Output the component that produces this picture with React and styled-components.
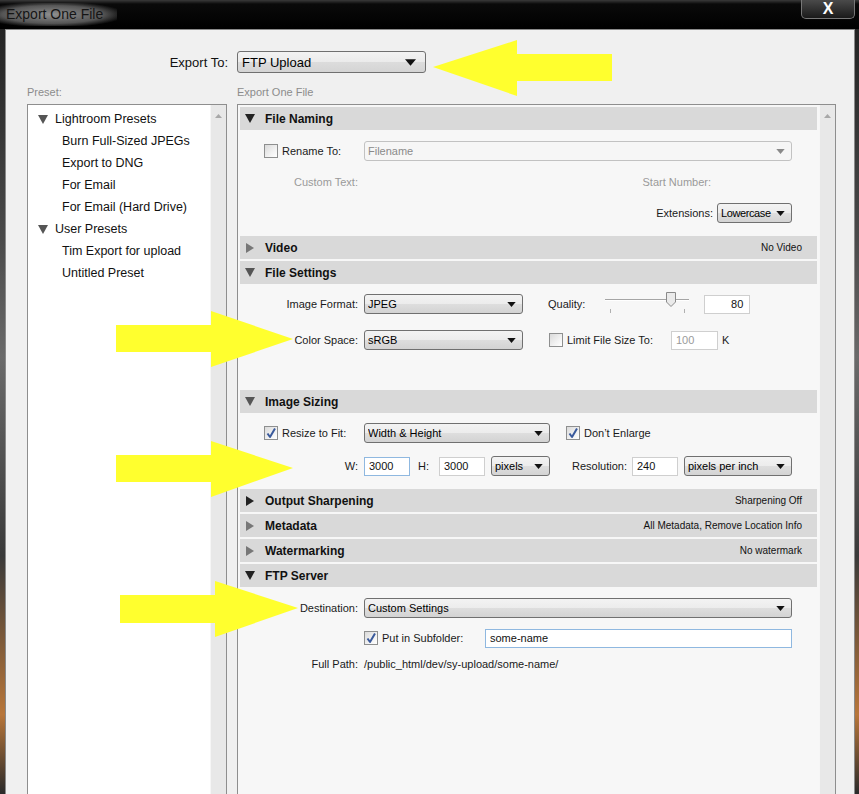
import React from "react";
import styled, { createGlobalStyle } from "styled-components";

const presets = [
  { group: "Lightroom Presets", items: ["Burn Full-Sized JPEGs", "Export to DNG", "For Email", "For Email (Hard Drive)"] },
  { group: "User Presets", items: ["Tim Export for upload", "Untitled Preset"] },
];

const collapsed = [
  { title: "Output Sharpening", summary: "Sharpening Off", dark: true },
  { title: "Metadata", summary: "All Metadata, Remove Location Info" },
  { title: "Watermarking", summary: "No watermark" },
];

const Triangle = ({ open, color }) =>
  open ? (
    <svg width="10" height="9" viewBox="0 0 10 9">
      <polygon points="0,0 10,0 5,9" fill={color} />
    </svg>
  ) : (
    <svg width="10" height="10" viewBox="0 0 10 10">
      <polygon points="1,0 9,5 1,10" fill={color} />
    </svg>
  );

const Caret = ({ size = 9, color = "#111" }) => (
  <svg width={size} height={Math.round(size * 0.6)} viewBox="0 0 10 6">
    <polygon points="0,0 10,0 5,6" fill={color} />
  </svg>
);

const Check = () => (
  <svg width="12" height="12" viewBox="0 0 12 12">
    <path d="M2.5 6.5 L5 10 L10 1.5" stroke="#3a5a9c" strokeWidth="2" fill="none" strokeLinejoin="round" />
  </svg>
);

const Box = ({ checked }) => <CheckBox>{checked && <Check />}</CheckBox>;

const Select = ({ children, disabled, tight, ...rest }) => (
  <SelectBox $disabled={disabled} {...rest}>
    <SelectText $tight={tight}>{children}</SelectText>
    <Caret color={disabled ? "#8a8a8a" : "#111"} />
  </SelectBox>
);

const Slider = ({ ml }) => (
  <SliderWrap $ml={ml}>
    <SliderTrack />
    <SliderTick $x={5} />
    <SliderTick $x={79} />
    <SliderThumb>
      <svg width="10" height="15" viewBox="0 0 10 15">
        <path d="M0.5 0.5 H9.5 V10 L5 14.5 L0.5 10 Z" fill="#eaeaea" stroke="#8a8a8a" />
      </svg>
    </SliderThumb>
  </SliderWrap>
);

const SectionHeader = ({ title, summary, open, arrow }) => (
  <Header>
    <HeaderIcon>
      <Triangle open={open} color={arrow} />
    </HeaderIcon>
    {title}
    {summary && <Summary>{summary}</Summary>}
  </Header>
);

const App = () => {
  return (
    <>
      <GlobalStyle />
      <Page>
        <TitleBar>
          <Title>Export One File</Title>
          <CloseButton>X</CloseButton>
        </TitleBar>
        <Window>
          <ExportRow>
            <ExportLabel>Export To:</ExportLabel>
            <ExportSelect>
              <span>FTP Upload</span>
              <Caret size={11} />
            </ExportSelect>
          </ExportRow>
          <CaptionRow>
            <Caption $w={210}>Preset:</Caption>
            <Caption>Export One File</Caption>
          </CaptionRow>
          <Columns>
            <LeftPanel>
              <PresetList>
                {presets.map((p) => (
                  <React.Fragment key={p.group}>
                    <GroupRow>
                      <Triangle open color="#555" />
                      {p.group}
                    </GroupRow>
                    {p.items.map((it) => (
                      <PresetRow key={it}>{it}</PresetRow>
                    ))}
                  </React.Fragment>
                ))}
              </PresetList>
              <ScrollTrack>
                <svg width="7" height="4" viewBox="0 0 7 4">
                  <polygon points="0,4 7,4 3.5,0" fill="#a8a8a8" />
                </svg>
              </ScrollTrack>
            </LeftPanel>

            <RightPanel>
              <Sections>
                <Section>
                  <SectionHeader title="File Naming" open arrow="#222" />
                  <Body $top={11} $gap={11} $bottom={11}>
                    <Row>
                      <CheckField $ml={24} $w={94}>
                        <Box />
                        <Text>Rename To:</Text>
                      </CheckField>
                      <Select disabled $ml={6} $w={428}>Filename</Select>
                    </Row>
                    <Row>
                      <FieldLabel $muted>Custom Text:</FieldLabel>
                      <Text $muted $ml="auto" $mr={81}>Start Number:</Text>
                    </Row>
                    <Row $end>
                      <Text>Extensions:</Text>
                      <Select $ml={4} $w={75} tight>Lowercase</Select>
                    </Row>
                  </Body>
                </Section>

                <SectionHeader title="Video" summary="No Video" arrow="#777" />

                <Section>
                  <SectionHeader title="File Settings" open arrow="#555" />
                  <Body $top={10} $gap={16} $bottom={38}>
                    <Row>
                      <FieldLabel>Image Format:</FieldLabel>
                      <Select $w={159}>JPEG</Select>
                      <Text $ml={25}>Quality:</Text>
                      <Slider ml={20} />
                      <TextInput $ml={15} $w={46} $right>80</TextInput>
                    </Row>
                    <Row>
                      <FieldLabel>Color Space:</FieldLabel>
                      <Select $w={159}>sRGB</Select>
                      <CheckField $ml={26} $w={122}>
                        <Box />
                        <Text>Limit File Size To:</Text>
                      </CheckField>
                      <TextInput $w={47} $muted>100</TextInput>
                      <Text $ml={4}>K</Text>
                    </Row>
                  </Body>
                </Section>

                <Section>
                  <SectionHeader title="Image Sizing" open arrow="#555" />
                  <Body $top={10} $gap={13} $bottom={11}>
                    <Row>
                      <CheckField $ml={24} $w={94}>
                        <Box checked />
                        <Text>Resize to Fit:</Text>
                      </CheckField>
                      <Select $ml={6} $w={186}>Width &amp; Height</Select>
                      <CheckField $ml={16}>
                        <Box checked />
                        <Text>Don’t Enlarge</Text>
                      </CheckField>
                    </Row>
                    <Row>
                      <FieldLabel>W:</FieldLabel>
                      <TextInput $w={46} $focus>3000</TextInput>
                      <Text $ml={8} $w={21}>H:</Text>
                      <TextInput $w={46}>3000</TextInput>
                      <Select $ml={6} $w={59}>pixels</Select>
                      <Text $ml={22} $w={60}>Resolution:</Text>
                      <TextInput $w={46}>240</TextInput>
                      <Select $ml={6} $w={108}>pixels per inch</Select>
                    </Row>
                  </Body>
                </Section>

                {collapsed.map((c) => (
                  <SectionHeader key={c.title} title={c.title} summary={c.summary} arrow={c.dark ? "#222" : "#777"} />
                ))}

                <Section $grow>
                  <SectionHeader title="FTP Server" open arrow="#222" />
                  <Body $top={11} $gap={10} $bottom={0}>
                    <Row>
                      <FieldLabel>Destination:</FieldLabel>
                      <Select $w={428}>Custom Settings</Select>
                    </Row>
                    <Row>
                      <CheckField $ml={124} $w={121}>
                        <Box checked />
                        <Text>Put in Subfolder:</Text>
                      </CheckField>
                      <TextInput $w={307} $focus>some-name</TextInput>
                    </Row>
                    <Row $h={12}>
                      <FieldLabel>Full Path:</FieldLabel>
                      <Text>/public_html/dev/sy-upload/some-name/</Text>
                    </Row>
                  </Body>
                </Section>
              </Sections>
              <ScrollTrack>
                <svg width="7" height="4" viewBox="0 0 7 4">
                  <polygon points="0,4 7,4 3.5,0" fill="#a8a8a8" />
                </svg>
              </ScrollTrack>
            </RightPanel>
          </Columns>
        </Window>

        {/* yellow annotation arrows drawn over the dialog */}
        <Arrows width="859" height="794" viewBox="0 0 859 794">
          <polygon points="433,67 517,40 517,54 612,54 612,81 517,81 517,96" />
          <polygon points="293,339 211,311 211,325 116,325 116,352 211,352 211,367" />
          <polygon points="293,468 211,441 211,455 116,455 116,482 211,482 211,497" />
          <polygon points="298,608 215,581 215,595 120,595 120,623 215,623 215,637" />
        </Arrows>
      </Page>
    </>
  );
};

export default App;

const GlobalStyle = createGlobalStyle`
  html, body {
    margin: 0;
    padding: 0;
    background: #111;
  }
  body {
    font-family: "Liberation Sans", Arial, sans-serif;
  }
`;

const Page = styled.div`
  position: relative;
  width: 859px;
  height: 794px;
  overflow: hidden;
  display: flex;
  flex-direction: column;
  background: linear-gradient(180deg, #1e1e1e 0%, #4a4a4a 30%, #6a6a6a 45%, #3a3a3a 70%, #b8763a 90%, #2a2a2a 100%);
`;

const TitleBar = styled.div`
  height: 29px;
  flex-shrink: 0;
  display: flex;
  align-items: flex-start;
  background: linear-gradient(180deg, #3a3a3a 0px, #0a0a0a 4px, #000 100%);
`;

const Title = styled.div`
  margin-top: 3px;
  padding: 3px 14px 4px 6px;
  font-size: 14px;
  color: #151515;
  background: radial-gradient(ellipse at 45% 50%, rgba(150, 150, 150, 0.95) 0%, rgba(120, 120, 120, 0.7) 55%, rgba(0, 0, 0, 0) 80%);
`;

const CloseButton = styled.div`
  margin-left: auto;
  margin-right: 4px;
  width: 54px;
  height: 19px;
  box-sizing: border-box;
  border: 1px solid #777;
  border-top: none;
  border-radius: 0 0 5px 5px;
  background: linear-gradient(180deg, #4a4a4a, #1a1a1a);
  color: #fff;
  font-weight: bold;
  font-size: 16px;
  display: flex;
  align-items: center;
  justify-content: center;
`;

const Window = styled.div`
  flex: 1;
  min-height: 0;
  margin: 0 4px 0 5px;
  background: #f0f0f0;
  border: 1px solid #8a8a8a;
  border-bottom: none;
  padding: 0 18px 0 21px;
  display: flex;
  flex-direction: column;
`;

const ExportRow = styled.div`
  display: flex;
  align-items: center;
  margin-top: 21px;
  height: 22px;
`;

const ExportLabel = styled.div`
  width: 201px;
  text-align: right;
  margin-right: 9px;
  font-size: 13px;
  color: #111;
`;

const ExportSelect = styled.div`
  width: 189px;
  height: 22px;
  box-sizing: border-box;
  border: 1px solid #707070;
  border-radius: 3px;
  background: linear-gradient(180deg, #f3f3f3 0%, #ebebeb 50%, #dcdcdc 51%, #d4d4d4 100%);
  display: flex;
  align-items: center;
  justify-content: space-between;
  padding: 0 9px 0 4px;
  font-size: 13px;
  color: #000;
`;

const CaptionRow = styled.div`
  display: flex;
  margin-top: 12px;
  height: 14px;
  font-size: 11px;
  line-height: 14px;
  color: #8c8c8c;
`;

const Caption = styled.div`
  width: ${(p) => (p.$w ? `${p.$w}px` : "auto")};
`;

const Columns = styled.div`
  flex: 1;
  min-height: 0;
  display: flex;
  gap: 10px;
  margin-top: 5px;
`;

const LeftPanel = styled.div`
  width: 200px;
  box-sizing: border-box;
  border: 1px solid #8e8e8e;
  border-bottom: none;
  background: #fff;
  display: flex;
`;

const PresetList = styled.div`
  flex: 1;
  padding-top: 3px;
`;

const GroupRow = styled.div`
  height: 22px;
  display: flex;
  align-items: center;
  gap: 7px;
  padding-left: 10px;
  font-size: 12.5px;
  color: #111;
`;

const PresetRow = styled.div`
  height: 22px;
  line-height: 22px;
  padding-left: 34px;
  font-size: 12.5px;
  color: #111;
`;

const ScrollTrack = styled.div`
  width: 16px;
  flex-shrink: 0;
  box-sizing: border-box;
  border-left: 1px solid #f6f6f6;
  background: #e8e8e8;
  display: flex;
  flex-direction: column;
  align-items: center;
  padding-top: 9px;
`;

const RightPanel = styled.div`
  flex: 1;
  box-sizing: border-box;
  border: 1px solid #8e8e8e;
  border-bottom: none;
  background: #f7f7f7;
  display: flex;
`;

const Sections = styled.div`
  flex: 1;
  padding: 2px 2px 0 2px;
  display: flex;
  flex-direction: column;
  gap: 2px;
`;

const Section = styled.div`
  display: flex;
  flex-direction: column;
  flex: ${(p) => (p.$grow ? 1 : "none")};
`;

const Header = styled.div`
  height: 23px;
  flex-shrink: 0;
  background: #d9d9d9;
  display: flex;
  align-items: center;
  padding: 0 15px 0 5px;
  font-size: 12px;
  font-weight: bold;
  color: #111;
`;

const HeaderIcon = styled.span`
  width: 10px;
  margin-right: 10px;
  display: flex;
  align-items: center;
`;

const Summary = styled.span`
  margin-left: auto;
  font-size: 10px;
  font-weight: normal;
  color: #111;
`;

const Body = styled.div`
  display: flex;
  flex-direction: column;
  gap: ${(p) => p.$gap}px;
  padding: ${(p) => p.$top}px 0 ${(p) => p.$bottom}px;
`;

const Row = styled.div`
  height: ${(p) => p.$h || 20}px;
  display: flex;
  align-items: center;
  justify-content: ${(p) => (p.$end ? "flex-end" : "flex-start")};
  padding-right: 25px;
  font-size: 11px;
`;

const FieldLabel = styled.span`
  width: 118px;
  flex-shrink: 0;
  margin-right: 6px;
  text-align: right;
  color: ${(p) => (p.$muted ? "#9a9a9a" : "#1a1a1a")};
`;

const px = (v) => (v === undefined ? "0" : typeof v === "number" ? `${v}px` : v);

const Text = styled.span`
  flex-shrink: 0;
  margin-left: ${(p) => px(p.$ml)};
  margin-right: ${(p) => px(p.$mr)};
  width: ${(p) => (p.$w ? `${p.$w}px` : "auto")};
  color: ${(p) => (p.$muted ? "#9a9a9a" : "#1a1a1a")};
  white-space: nowrap;
`;

const CheckField = styled.span`
  display: flex;
  align-items: center;
  gap: 4px;
  flex-shrink: 0;
  margin-left: ${(p) => px(p.$ml)};
  width: ${(p) => (p.$w ? `${p.$w}px` : "auto")};
`;

const CheckBox = styled.span`
  width: 14px;
  height: 14px;
  box-sizing: border-box;
  border: 1px solid #8e8f8f;
  background: linear-gradient(135deg, #dadada 0%, #f2f2f2 60%, #fff 100%);
  display: flex;
  align-items: center;
  justify-content: center;
  flex-shrink: 0;
`;

const SelectBox = styled.div`
  width: ${(p) => p.$w}px;
  height: 20px;
  margin-left: ${(p) => px(p.$ml)};
  flex-shrink: 0;
  box-sizing: border-box;
  border: 1px solid ${(p) => (p.$disabled ? "#c2c2c2" : "#707070")};
  border-radius: 3px;
  background: ${(p) =>
    p.$disabled
      ? "#f6f6f6"
      : "linear-gradient(180deg, #f3f3f3 0%, #ececec 50%, #dedede 51%, #d3d3d3 100%)"};
  color: ${(p) => (p.$disabled ? "#8a8a8a" : "#000")};
  display: flex;
  align-items: center;
  padding: 0 6px 0 3px;
  gap: 4px;
`;

const SelectText = styled.span`
  flex: 1;
  overflow: hidden;
  white-space: nowrap;
  letter-spacing: ${(p) => (p.$tight ? "-0.4px" : "normal")};
`;

const TextInput = styled.div`
  width: ${(p) => p.$w}px;
  height: 19px;
  margin-left: ${(p) => px(p.$ml)};
  flex-shrink: 0;
  box-sizing: border-box;
  border: 1px solid ${(p) => (p.$focus ? "#8fb8e0" : "#cfcfcf")};
  background: #fff;
  padding: 0 ${(p) => (p.$right ? 6 : 4)}px 0 4px;
  display: flex;
  align-items: center;
  justify-content: ${(p) => (p.$right ? "flex-end" : "flex-start")};
  color: ${(p) => (p.$muted ? "#9a9a9a" : "#111")};
`;

const SliderWrap = styled.div`
  position: relative;
  width: 84px;
  height: 20px;
  margin-left: ${(p) => px(p.$ml)};
  flex-shrink: 0;
`;

const SliderTrack = styled.div`
  position: absolute;
  left: 0;
  right: 0;
  top: 5px;
  height: 1px;
  background: #a5a5a5;
  border-bottom: 1px solid #fff;
`;

const SliderTick = styled.div`
  position: absolute;
  left: ${(p) => p.$x}px;
  top: 15px;
  width: 1px;
  height: 4px;
  background: #b0b0b0;
`;

const SliderThumb = styled.div`
  position: absolute;
  left: 61px;
  top: -2px;
  display: flex;
`;

const Arrows = styled.svg`
  position: absolute;
  left: 0;
  top: 0;
  pointer-events: none;
  fill: #ffff2e;
`;
